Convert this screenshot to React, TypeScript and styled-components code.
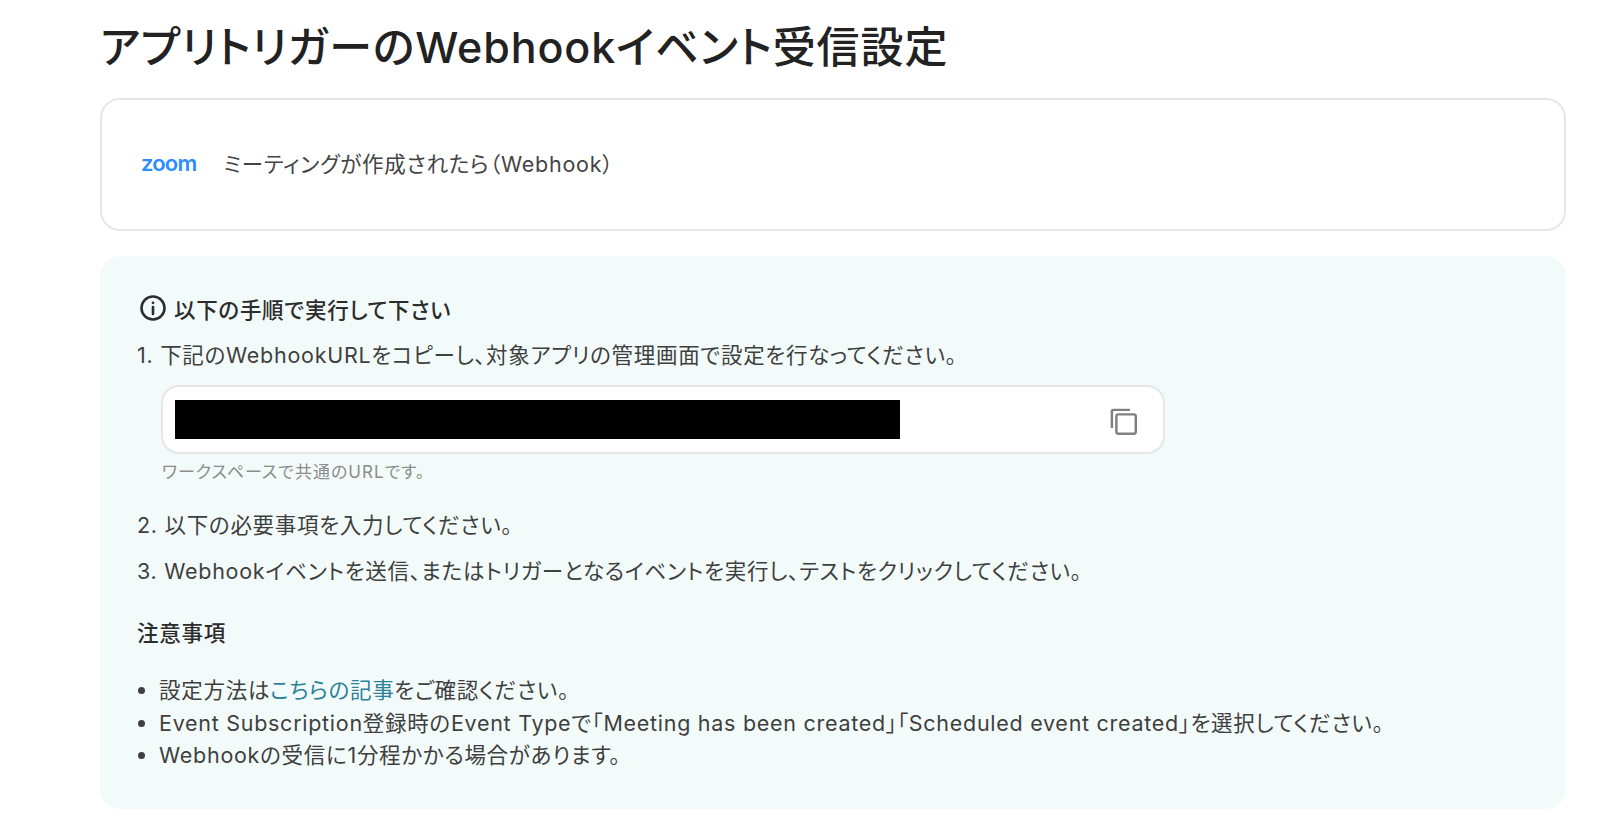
import styled, { createGlobalStyle } from 'styled-components';

const GlobalStyle = createGlobalStyle`
  html, body {
    margin: 0;
    padding: 0;
    background: #fff;
  }
  body {
    font-family: Inter, 'Noto Sans CJK JP', sans-serif;
    font-feature-settings: 'palt';
    color: #3a3a3a;
  }
`;

const Page = styled.div`
  width: 1600px;
  height: 834px;
  box-sizing: border-box;
  padding: 21px 34px 0 100px;
  overflow: hidden;
`;

const Title = styled.h1`
  margin: 0;
  font-size: 43px;
  line-height: 52px;
  font-weight: 500;
  letter-spacing: 0.9px;
  color: #222;
`;

const TriggerCard = styled.div`
  margin-top: 25px;
  height: 133px;
  box-sizing: border-box;
  border: 2px solid #e6e6e6;
  border-radius: 20px;
  display: flex;
  align-items: center;
  padding: 0 0 4px 39px;
  gap: 27px;
  font-size: 21.5px;
  letter-spacing: 0.75px;
  color: #444;
`;

const ZoomLogo = styled.span`
  font-family: Inter, sans-serif;
  font-size: 22px;
  font-weight: 600;
  letter-spacing: -0.8px;
  color: #2d8cff;
`;

const Panel = styled.section`
  margin-top: 25px;
  height: 553px;
  box-sizing: border-box;
  background: #f3fbfa;
  border-radius: 20px;
  padding: 38px 36px 0 37px;
  font-size: 21.5px;
  letter-spacing: 0.72px;
`;

const Heading = styled.div`
  display: flex;
  align-items: center;
  gap: 7px;
  height: 28px;
  font-size: 21.5px;
  font-weight: 500;
  color: #2c2c2c;
  padding-left: 2px;
`;

const InfoIcon = styled.svg`
  width: 28px;
  height: 28px;
  flex: none;
`;

const Step = styled.div<{ $top: number }>`
  margin-top: ${(p) => p.$top}px;
  line-height: 30px;
  color: #3f3f3f;
`;

const UrlField = styled.div`
  margin: 15px 0 0 24px;
  width: 1004px;
  height: 69px;
  box-sizing: border-box;
  background: #fff;
  border: 2px solid #e6e6e6;
  border-radius: 18px;
  display: flex;
  align-items: center;
  justify-content: space-between;
  padding: 0 24px 0 12px;
`;

const Redacted = styled.div`
  width: 725px;
  height: 39px;
  background: #000;
`;

const CopyIcon = styled.svg`
  width: 31px;
  height: 31px;
  color: #808080;
  margin-top: 4px;
`;

const Hint = styled.div`
  margin: 6px 0 0 25px;
  font-size: 17px;
  letter-spacing: 1px;
  line-height: 24px;
  color: #8c8c8c;
`;

const NoteTitle = styled.div`
  margin-top: 32px;
  font-size: 21.5px;
  font-weight: 500;
  line-height: 30px;
  color: #2c2c2c;
`;

const NoteList = styled.ul`
  margin: 26px 0 0;
  padding: 0 0 0 22px;
  list-style: disc;
  line-height: 32.5px;
  color: #3f3f3f;
`;

const NoteLink = styled.a`
  color: #2b8299;
  text-decoration: none;
`;

export default function App() {
  return (
    <Page>
      <GlobalStyle />
      <Title>アプリトリガーのWebhookイベント受信設定</Title>
      <TriggerCard>
        <ZoomLogo>zoom</ZoomLogo>
        <span>ミーティングが作成されたら（Webhook）</span>
      </TriggerCard>
      <Panel>
        <Heading>
          <InfoIcon viewBox="0 0 28 28" fill="none" stroke="#2c2c2c" strokeWidth="2.6">
            <circle cx="14" cy="14" r="11.5" />
            <path d="M14 13v7" strokeLinecap="round" />
            <circle cx="14" cy="8.8" r="1.4" fill="#2c2c2c" stroke="none" />
          </InfoIcon>
          以下の手順で実行して下さい
        </Heading>
        <Step $top={18}>1. 下記のWebhookURLをコピーし、対象アプリの管理画面で設定を行なってください。</Step>
        <UrlField>
          <Redacted />
          <CopyIcon viewBox="0 0 24 24" fill="none" stroke="currentColor" strokeWidth="1.9">
            <rect x="6.5" y="6.5" width="15" height="15" rx="1.5" />
            <path d="M3 17V4.2C3 3.5 3.5 3 4.2 3H17" />
          </CopyIcon>
        </UrlField>
        <Hint>ワークスペースで共通のURLです。</Hint>
        <Step $top={26}>2. 以下の必要事項を入力してください。</Step>
        <Step $top={16}>3. Webhookイベントを送信、またはトリガーとなるイベントを実行し、テストをクリックしてください。</Step>
        <NoteTitle>注意事項</NoteTitle>
        <NoteList>
          <li>設定方法は<NoteLink href="#">こちらの記事</NoteLink>をご確認ください。</li>
          <li>Event Subscription登録時のEvent Typeで「Meeting has been created」「Scheduled event created」を選択してください。</li>
          <li>Webhookの受信に1分程かかる場合があります。</li>
        </NoteList>
      </Panel>
    </Page>
  );
}
